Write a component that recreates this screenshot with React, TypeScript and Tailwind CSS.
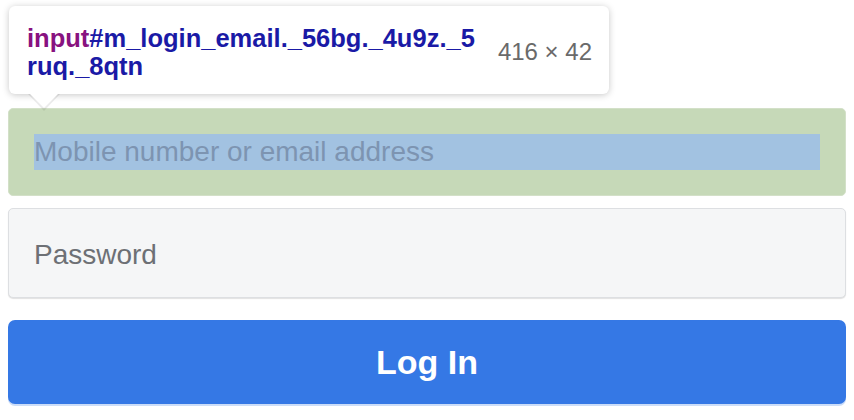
import React from 'react';

const font = { fontFamily: '"Liberation Sans", Arial, sans-serif' };

function InspectTooltip() {
  return (
    <div className="absolute left-[9px] top-[6px] w-[600px]">
      <div className="relative z-10 flex items-center justify-between rounded-[6px] bg-white pl-[18px] pr-[17px] pt-[18px] pb-[14px] shadow-[0_1px_7px_rgba(0,0,0,0.22)]">
        <div className="text-[25.5px] font-bold leading-[28px]">
          <span className="text-[#881280]">input</span>
          <span className="text-[#1a1aa6]">#m_login_email._56bg._4u9z._5</span>
          <br />
          <span className="text-[#1a1aa6]">ruq._8qtn</span>
        </div>
        <div className="text-[24px] leading-[28px] text-[#6a6a6a]">416 × 42</div>
      </div>
      {/* arrow */}
      <svg
        className="absolute left-[20px] top-[87px] z-20"
        width="30"
        height="16"
        viewBox="0 0 30 16"
      >
        <path d="M0 0 L30 0 L15 15 Z" fill="#ffffff" />
      </svg>
      <svg
        className="absolute left-[19px] top-[88px] z-0"
        width="32"
        height="18"
        viewBox="0 0 32 18"
      >
        <path d="M0 0 L32 0 L16 17 Z" fill="rgba(0,0,0,0.08)" />
      </svg>
    </div>
  );
}

export default function App() {
  return (
    <div className="relative h-[420px] w-[854px] overflow-hidden bg-white" style={font}>
      <div className="flex flex-col px-[8px] pt-[108px]">
        {/* email input, highlighted by the inspector */}
        <div className="h-[88px] rounded-[5px] border border-[#d3e0c8] bg-[#c6d9b8] px-[25px] py-[25px]">
          <div className="flex h-[36px] items-center bg-[#a2c2e1] text-[28px] leading-[36px] text-[#7d94b1]">
            Mobile number or email address
          </div>
        </div>

        {/* password input */}
        <div className="mt-[12px] flex h-[90px] items-center rounded-[5px] border border-[#dddfe2] bg-[#f5f6f7] pl-[25px] pt-[3px] shadow-[0_1px_1px_rgba(0,0,0,0.12)]">
          <span className="text-[28px] text-[#6d7075]">Password</span>
        </div>

        {/* log in button */}
        <button className="mt-[22px] flex h-[84px] items-center justify-center rounded-[7px] bg-[#3578e5] text-[34px] font-bold text-white shadow-[0_2px_0_rgba(53,120,229,0.25)]">
          Log In
        </button>
      </div>

      <InspectTooltip />
    </div>
  );
}
